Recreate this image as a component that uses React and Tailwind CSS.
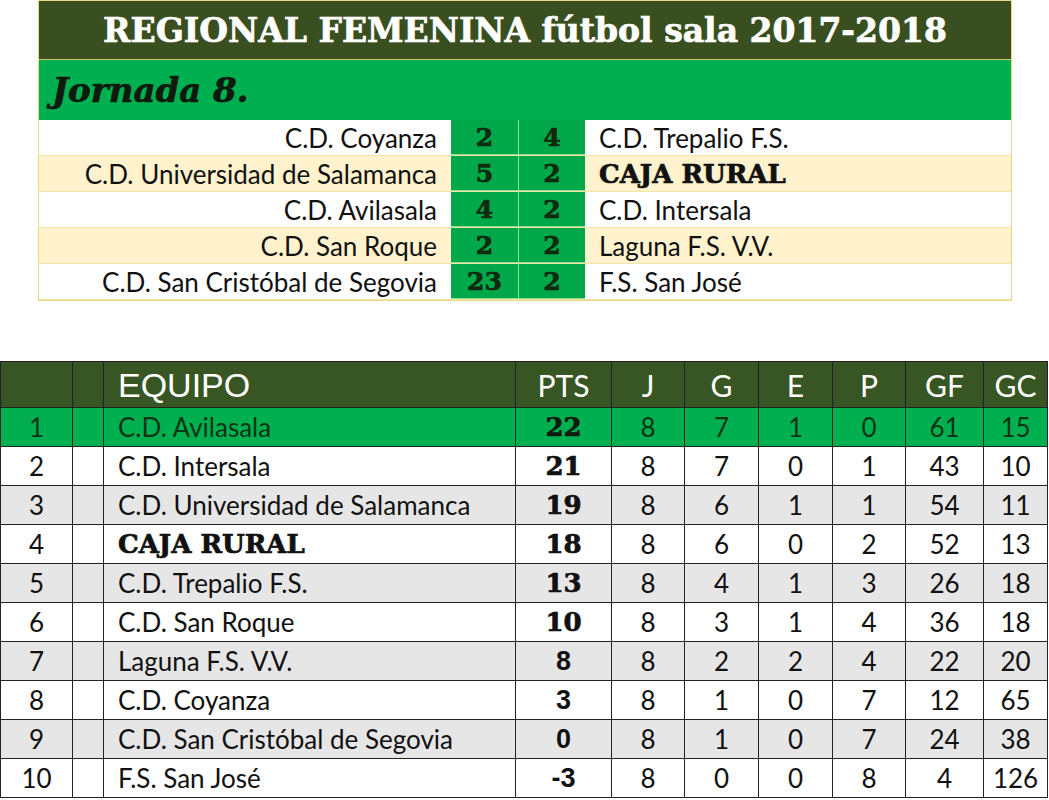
const results = [
  { home: 'C.D. Coyanza', hs: '2', as: '4', away: 'C.D. Trepalio F.S.', bg: 'bg-white' },
  { home: 'C.D. Universidad de Salamanca', hs: '5', as: '2', away: 'CAJA RURAL', bg: 'bg-[#fff2cc]', boldAway: true },
  { home: 'C.D. Avilasala', hs: '4', as: '2', away: 'C.D. Intersala', bg: 'bg-white' },
  { home: 'C.D. San Roque', hs: '2', as: '2', away: 'Laguna F.S. V.V.', bg: 'bg-[#fff2cc]' },
  { home: 'C.D. San Cristóbal de Segovia', hs: '23', as: '2', away: 'F.S. San José', bg: 'bg-white' },
];

const standings = [
  { pos: 1, team: 'C.D. Avilasala', pts: '22', j: 8, g: 7, e: 1, p: 0, gf: 61, gc: 15 },
  { pos: 2, team: 'C.D. Intersala', pts: '21', j: 8, g: 7, e: 0, p: 1, gf: 43, gc: 10 },
  { pos: 3, team: 'C.D. Universidad de Salamanca', pts: '19', j: 8, g: 6, e: 1, p: 1, gf: 54, gc: 11 },
  { pos: 4, team: 'CAJA RURAL', pts: '18', j: 8, g: 6, e: 0, p: 2, gf: 52, gc: 13, bold: true },
  { pos: 5, team: 'C.D. Trepalio F.S.', pts: '13', j: 8, g: 4, e: 1, p: 3, gf: 26, gc: 18 },
  { pos: 6, team: 'C.D. San Roque', pts: '10', j: 8, g: 3, e: 1, p: 4, gf: 36, gc: 18 },
  { pos: 7, team: 'Laguna F.S. V.V.', pts: '8', j: 8, g: 2, e: 2, p: 4, gf: 22, gc: 20, sans: true },
  { pos: 8, team: 'C.D. Coyanza', pts: '3', j: 8, g: 1, e: 0, p: 7, gf: 12, gc: 65, sans: true },
  { pos: 9, team: 'C.D. San Cristóbal de Segovia', pts: '0', j: 8, g: 1, e: 0, p: 7, gf: 24, gc: 38, sans: true },
  { pos: 10, team: 'F.S. San José', pts: '-3', j: 8, g: 0, e: 0, p: 8, gf: 4, gc: 126, sans: true },
];

// calibri-ish body, bookman-ish heavy slab
const body = "font-['Lato',sans-serif] leading-none";
const slab = "font-['DejaVu_Serif',serif] font-bold leading-none [-webkit-text-stroke:0.7px_currentColor]";
const arial = "font-['Liberation_Sans',sans-serif] leading-none";

function ResultRow({ r }) {
  return (
    <div className={`grid grid-cols-[412px_68px_66px_1fr] h-[36px] border-b border-[#f3e3a8] ${r.bg}`}>
      <div className={`${body} flex items-center justify-end pr-[14px] text-[26px] text-[#111]`}>{r.home}</div>
      <div className={`${slab} flex items-center justify-center bg-[#00a84a] text-[25px] text-[#0f2a0f] border-r border-b border-[#8fe08f]`}>{r.hs}</div>
      <div className={`${slab} flex items-center justify-center bg-[#00a84a] text-[25px] text-[#0f2a0f] border-b border-[#8fe08f]`}>{r.as}</div>
      <div className={`flex items-center pl-[14px] text-[#111] ${r.boldAway ? `${slab} text-[26px]` : `${body} text-[26px]`}`}>{r.away}</div>
    </div>
  );
}

function Cell({ children, className = '' }) {
  return <div className={`flex items-center justify-center ${className}`}>{children}</div>;
}

export default function App() {
  const rowBg = (i) => (i === 0 ? 'bg-[#00b050]' : i % 2 === 0 ? 'bg-[#e7e6e6]' : 'bg-white');
  return (
    <div className="w-[1049px] h-[800px] bg-white overflow-hidden">
      <div className="ml-[38px] w-[974px] border border-[#e8d98a]">
        <div className="h-[59px] bg-[#3a4f20] flex items-center justify-center border-b border-[#c9c56a]">
          <span className={`${slab} text-[33px] text-white`}>REGIONAL FEMENINA fútbol sala 2017-2018</span>
        </div>
        <div className="h-[60px] bg-[#00b050] flex items-center pl-[13px]">
          <span className={`${slab} italic text-[34px] text-[#0d1a0d]`}>Jornada 8.</span>
        </div>
        {results.map((r) => (
          <ResultRow key={r.home} r={r} />
        ))}
      </div>

      <div className="mt-[60px] w-[1048px] border border-[#222] grid grid-cols-[71px_30px_411px_95px_72px_73px_73px_72px_77px_1fr] grid-rows-[45px_repeat(10,38px)] gap-px bg-[#222]">
        <div className="bg-[#375623]" />
        <div className="bg-[#375623]" />
        <div className={`bg-[#375623] flex items-center pl-[14px] text-white text-[34px] ${arial}`}>EQUIPO</div>
        {['PTS', 'J', 'G', 'E', 'P', 'GF', 'GC'].map((h) => (
          <Cell key={h} className={`bg-[#375623] text-white text-[30px] ${body}`}>{h}</Cell>
        ))}
        {standings.map((s, i) => {
          const bg = rowBg(i);
          const txt = i === 0 ? 'text-[#0b3514]' : 'text-[#111]';
          return [
            <Cell key={`p${i}`} className={`${bg} ${txt} text-[26px] ${body}`}>{s.pos}</Cell>,
            <div key={`b${i}`} className={bg} />,
            <div key={`t${i}`} className={`${bg} ${txt} flex items-center pl-[14px] ${s.bold ? `${slab} text-[26px]` : `${body} text-[26px]`}`}>{s.team}</div>,
            <Cell key={`s${i}`} className={`${bg} ${i === 0 ? 'text-[#0d1a0d]' : 'text-[#111]'} ${s.sans ? `${arial} font-bold text-[27px]` : `${slab} text-[26px]`}`}>{s.pts}</Cell>,
            ...[s.j, s.g, s.e, s.p, s.gf, s.gc].map((v, k) => (
              <Cell key={`v${i}-${k}`} className={`${bg} ${txt} text-[26px] ${body}`}>{v}</Cell>
            )),
          ];
        })}
      </div>
    </div>
  );
}
